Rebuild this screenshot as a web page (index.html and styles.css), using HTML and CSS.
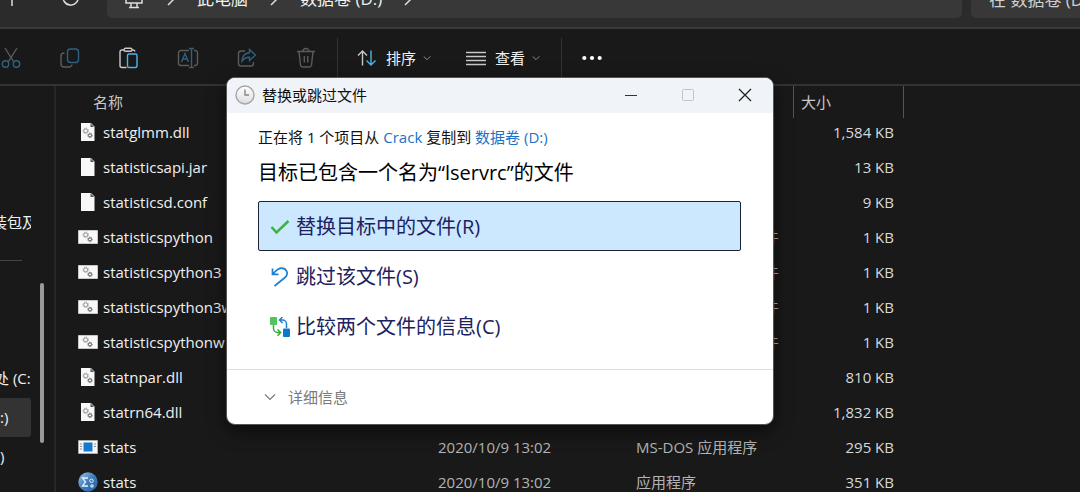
FILE: index.html
```html
<!DOCTYPE html>
<html lang="zh-CN">
<head>
<meta charset="utf-8">
<title>数据卷 (D:)</title>
<link rel="stylesheet" href="styles.css">
</head>
<body>
<svg class="defs" aria-hidden="true">
  <symbol id="gears" viewBox="0 0 12 12">
    <circle cx="3.7" cy="3.8" r="2" fill="none" stroke="#8a8a8a" stroke-width=".9"/>
    <circle cx="3.7" cy="3.8" r="2.800" fill="none" stroke="#999" stroke-width=".9" stroke-dasharray="1.1 1.1"/>
    <circle cx="8" cy="8.4" r="1.6" fill="none" stroke="#555" stroke-width="1"/>
    <circle cx="8" cy="8.4" r="2.300" fill="none" stroke="#666" stroke-width=".8" stroke-dasharray=".9 .9"/>
  </symbol>
  <symbol id="file-blank" viewBox="0 0 20 20">
    <path d="M3 1h9.500l4 4v14H3z" fill="#f8f8f8"/>
    <path d="M12.500 1v4h4z" fill="#555"/><path d="M12.500 1l4 4" stroke="#ddd" stroke-width=".8"/>
  </symbol>
  <symbol id="file-dll" viewBox="0 0 20 20">
    <use href="#file-blank"/><use href="#gears" x="4" y="5" width="12" height="12"/>
  </symbol>
  <symbol id="file-bat" viewBox="0 0 20 20">
    <path d="M.5 3.500h19v13H.5z" fill="#f8f8f8" stroke="#c8c8c8"/>
    <use href="#gears" x="4" y="4" width="12" height="12"/>
  </symbol>
  <symbol id="file-dos" viewBox="0 0 20 20">
    <path d="M.5 3.500h19v13H.5z" fill="#f8f8f8" stroke="#aaa"/>
    <path d="M5.500 5.500h9v9h-9z" fill="#1479d0"/>
    <path d="M2 7h2M2 9.500h2M2 12h2M16 7h2M16 9.500h2" stroke="#888"/>
  </symbol>
  <symbol id="file-stats" viewBox="0 0 20 20">
    <circle cx="10" cy="10" r="9.700" fill="url(#ball)"/>
    <path d="M10 6H4.500l3 4-3 4H10" fill="none" stroke="#e4f0fb" stroke-width="1.300"/>
    <circle cx="13.500" cy="8.800" r="1.700" fill="none" stroke="#e4f0fb"/>
    <circle cx="14" cy="14" r="1.800" fill="#bcd8f0"/>
  </symbol>
  <symbol id="chevron-right" viewBox="0 0 8 14"><path d="M1 1l6 6-6 6" fill="none" stroke="#ddd" stroke-width="1.500"/></symbol>
  <symbol id="chevron-down" viewBox="0 0 12 8"><path d="M1 1.500l5 5 5-5" fill="none" stroke="currentColor" stroke-width="1.200"/></symbol>
  <linearGradient id="ball" x1="0" y1="0" x2="1" y2="1"><stop offset="0" stop-color="#9cc6ea"/><stop offset=".5" stop-color="#3f7db8"/><stop offset="1" stop-color="#2a5f98"/></linearGradient>
  <linearGradient id="clock-face" x1="0" y1="0" x2="0" y2="1"><stop offset="0" stop-color="#fff"/><stop offset="1" stop-color="#ddd"/></linearGradient>
</svg>

<div class="explorer">
  <header class="addressbar">
    <button class="nav-button" aria-label="向上"><svg width="20" height="20" viewBox="0 0 20 20"><path d="M10 18V3M4 9l6-6 6 6"/></svg></button>
    <button class="nav-button" aria-label="刷新"><svg width="20" height="20" viewBox="0 0 20 20"><path d="M17 8a7.500 7.500 0 1 1-3-4.500M14 0v4h-4"/></svg></button>
    <nav class="path" aria-label="路径">
      <svg class="monitor" width="18" height="18" viewBox="0 0 18 18"><path d="M1 1h16v11H1zM6 12.500v4M12 12.500v4M4 16.500h10"/></svg>
      <svg class="crumb-arrow" width="8" height="14"><use href="#chevron-right"/></svg>
      <button class="crumb">此电脑</button>
      <svg class="crumb-arrow" width="8" height="14"><use href="#chevron-right"/></svg>
      <button class="crumb">数据卷 (D:)</button>
      <svg class="crumb-arrow" width="8" height="14"><use href="#chevron-right"/></svg>
    </nav>
    <input class="search" type="text" aria-label="搜索" placeholder="在 数据卷 (D:) 中搜索">
  </header>

  <div class="toolbar" role="toolbar">
    <button class="tool dim" aria-label="剪切"><svg width="22" height="22" viewBox="0 0 22 22"><path d="M5 1l8.500 13.500M17 1L8.500 14.500" class="g"/><circle cx="5.500" cy="17" r="3.200" class="b"/><circle cx="16.500" cy="17" r="3.200" class="b"/></svg></button>
    <button class="tool dim" aria-label="复制"><svg width="22" height="22" viewBox="0 0 22 22"><path d="M5.500 6H5a3 3 0 0 0-3 3v8a3 3 0 0 0 3 3h5a3 3 0 0 0 3-2.500" class="g"/><rect x="8.500" y="2" width="11" height="13.500" rx="3" class="b"/></svg></button>
    <button class="tool" aria-label="粘贴"><svg width="22" height="22" viewBox="0 0 22 22"><path d="M6 3H4a2 2 0 0 0-2 2v13.500a2 2 0 0 0 2 2h4.500M14 3h1a2 2 0 0 1 2 1.500" class="g"/><rect x="6" y="1.200" width="8" height="3" rx="1.500" class="g"/><rect x="9.500" y="7" width="9.500" height="13.500" rx="1.500" class="b"/></svg></button>
    <button class="tool dim" aria-label="重命名"><svg width="22" height="22" viewBox="0 0 22 22"><path d="M12 3.500H4a2.500 2.500 0 0 0-2.500 2.500v10A2.500 2.500 0 0 0 4 18.500h8M17 3.500h.5A2.500 2.500 0 0 1 20.500 6v10a2.500 2.500 0 0 1-3 2.500H17" class="g"/><path d="M4.500 15L8 6.500l3.500 8.500M5.700 12h4.600M14.500 1.500v19M12 1.500h5M12 20.500h5" class="b"/></svg></button>
    <button class="tool dim" aria-label="共享"><svg width="22" height="22" viewBox="0 0 22 22"><path d="M9 4H5a2.500 2.500 0 0 0-2.500 2.500v10A2.500 2.500 0 0 0 5 19h10a2.500 2.500 0 0 0 2.500-2.500V15" class="g"/><path d="M13.500 2.500l6 5.500-6 5.500v-3.300c-3.500-.2-5.500 1-7.500 3.800.3-5 3-8 7.500-8.300z" class="b"/></svg></button>
    <button class="tool dim" aria-label="删除"><svg width="22" height="22" viewBox="0 0 22 22"><path d="M2 4.500h18M4 4.500L5.500 18a2.300 2.300 0 0 0 2.300 2h6.400a2.300 2.300 0 0 0 2.300-2L18 4.500M8 4.500a3 3 0 0 1 6 0M9.300 9v6.500M12.700 9v6.500" class="g"/></svg></button>
    <span class="rule"></span>
    <button class="menu"><svg width="20" height="18" viewBox="0 0 20 18"><path d="M5.500 16.500V2M1 6.500L5.500 2 10 6.500" class="g"/><path d="M14 1.500V16M9.500 11.500L14 16l4.500-4.500" class="b"/></svg>排序<svg class="caret" width="8" height="6"><use href="#chevron-down"/></svg></button>
    <button class="menu"><svg width="20" height="18" viewBox="0 0 20 18"><path d="M0 3.500h20M0 7.500h20M0 11.500h20M0 15.500h20" class="g"/></svg>查看<svg class="caret" width="8" height="6"><use href="#chevron-down"/></svg></button>
    <span class="rule"></span>
    <button class="more" aria-label="更多"><svg width="20" height="6" viewBox="0 0 20 6"><g fill="#fff"><circle cx="2.300" cy="3" r="2.100"/><circle cx="10" cy="3" r="2.100"/><circle cx="17.700" cy="3" r="2.100"/></g></svg></button>
  </div>

  <main class="content">
    <aside class="sidebar">
      <nav class="tree">
        <a class="place" href="#">装包及</a>
        <hr class="tree-rule">
        <a class="place drive-c" href="#">处 (C:)</a>
        <a class="place selected" href="#">:)</a>
        <a class="place" href="#">)</a>
      </nav>
      <div class="scrollbar"></div>
    </aside>
    <table class="files">
      <colgroup><col class="c-name"><col class="c-date"><col class="c-type"><col class="c-size"><col></colgroup>
      <thead><tr><th>名称</th><th>修改日期</th><th class="split">类型</th><th class="split">大小</th><th></th></tr></thead>
      <tbody>
        <tr><td><span class="name"><svg width="20" height="20"><use href="#file-dll"/></svg>statglmm.dll</span></td><td></td><td></td><td class="size">1,584 KB</td><td></td></tr>
        <tr><td><span class="name"><svg width="20" height="20"><use href="#file-blank"/></svg>statisticsapi.jar</span></td><td></td><td></td><td class="size">13 KB</td><td></td></tr>
        <tr><td><span class="name"><svg width="20" height="20"><use href="#file-blank"/></svg>statisticsd.conf</span></td><td></td><td></td><td class="size">9 KB</td><td></td></tr>
        <tr><td><span class="name"><svg width="20" height="20"><use href="#file-bat"/></svg>statisticspython</span></td><td></td><td>Windows 批处理文件</td><td class="size">1 KB</td><td></td></tr>
        <tr><td><span class="name"><svg width="20" height="20"><use href="#file-bat"/></svg>statisticspython3</span></td><td></td><td>Windows 批处理文件</td><td class="size">1 KB</td><td></td></tr>
        <tr><td><span class="name"><svg width="20" height="20"><use href="#file-bat"/></svg>statisticspython3w</span></td><td></td><td>Windows 批处理文件</td><td class="size">1 KB</td><td></td></tr>
        <tr><td><span class="name"><svg width="20" height="20"><use href="#file-bat"/></svg>statisticspythonw</span></td><td></td><td>Windows 批处理文件</td><td class="size">1 KB</td><td></td></tr>
        <tr><td><span class="name"><svg width="20" height="20"><use href="#file-dll"/></svg>statnpar.dll</span></td><td></td><td></td><td class="size">810 KB</td><td></td></tr>
        <tr><td><span class="name"><svg width="20" height="20"><use href="#file-dll"/></svg>statrn64.dll</span></td><td></td><td></td><td class="size">1,832 KB</td><td></td></tr>
        <tr><td><span class="name"><svg width="20" height="20"><use href="#file-dos"/></svg>stats</span></td><td>2020/10/9 13:02</td><td>MS-DOS 应用程序</td><td class="size">295 KB</td><td></td></tr>
        <tr><td><span class="name"><svg width="20" height="20"><use href="#file-stats"/></svg>stats</span></td><td>2020/10/9 13:02</td><td>应用程序</td><td class="size">351 KB</td><td></td></tr>
      </tbody>
    </table>
  </main>
</div>

<section class="dialog" role="dialog" aria-labelledby="dialog-title">
  <div class="titlebar">
    <svg width="20" height="20" viewBox="0 0 20 20"><circle cx="10" cy="10" r="9" fill="url(#clock-face)" stroke="#a5a5a5" stroke-width="1.400"/><path d="M10 4.500V10h4" fill="none" stroke="#888" stroke-width="1.400"/></svg>
    <span class="title" id="dialog-title">替换或跳过文件</span>
    <button class="window-button" aria-label="最小化"><svg width="14" height="14" viewBox="0 0 14 14"><path d="M1 7.500h12" stroke="#333"/></svg></button>
    <button class="window-button" aria-label="最大化" disabled><svg width="14" height="14" viewBox="0 0 14 14"><rect x="1.500" y="1.500" width="11" height="11" rx="1" fill="none" stroke="#c2c5ca"/></svg></button>
    <button class="window-button" aria-label="关闭"><svg width="14" height="14" viewBox="0 0 14 14"><path d="M1 1l12 12M13 1L1 13" stroke="#222" stroke-width="1.300"/></svg></button>
  </div>
  <div class="dialog-body">
    <p class="summary">正在将 1 个项目从 <a href="#">Crack</a> 复制到 <a href="#">数据卷 (D:)</a></p>
    <h1 class="question">目标已包含一个名为“lservrc”的文件</h1>
    <button class="option current"><svg width="20" height="20" viewBox="0 0 20 20"><path d="M1.500 10l5 5.500L18.500 4" fill="none" stroke="#3cb43c" stroke-width="2.600"/></svg>替换目标中的文件(R)</button>
    <button class="option"><svg width="20" height="20" viewBox="0 0 20 20"><path d="M4.500 19L15 10.500C19.500 6.500 16 .8 11 1.200 7.500 1.500 5.500 4 3 7M2.500 1.500V7.300h6" fill="none" stroke="#1a80d2" stroke-width="1.700"/></svg>跳过该文件(S)</button>
    <button class="option"><svg width="20" height="20" viewBox="0 0 20 20"><rect x="0" y="0" width="7" height="8" rx="1" fill="#50c35a"/><path d="M3.500 8v3.500a4 4 0 0 0 4 4H10M7.500 12.500l3.200 3-3.200 3.200" fill="none" stroke="#3aa83a" stroke-width="1.500"/><rect x="13" y="11.500" width="7" height="8.500" rx="1" fill="#0b78d0"/><path d="M16.500 11V7a4 4 0 0 0-4-4h-2.500M12.500 0L9.500 3l3 3" fill="none" stroke="#1a80d2" stroke-width="1.500"/></svg>比较两个文件的信息(C)</button>
  </div>
  <div class="dialog-footer">
    <button class="details"><svg width="12" height="8"><use href="#chevron-down"/></svg>详细信息</button>
  </div>
</section>
</body>
</html>
```
FILE: styles.css
```css
* { box-sizing: border-box; }
body {
  margin: 0;
  background: #191919;
  color: #f0f0f0;
  font: 15px/20px "Open Sans", "Noto Sans CJK SC", sans-serif;
}
button, input { font: inherit; color: inherit; background: none; border: 0; padding: 0; }
button { display: flex; align-items: center; }
a { color: inherit; text-decoration: none; }
svg { flex: none; }
.defs { position: absolute; width: 0; height: 0; }

.explorer { display: flex; flex-direction: column; height: 100vh; overflow: hidden; }

.addressbar {
  display: flex;
  align-items: flex-end;
  flex: none;
  height: 29px;
  padding-bottom: 9px;
  background: #2b2b2b;
  border-bottom: 2px solid #393939;
  font-size: 17px;
  overflow: hidden;
}
.nav-button { width: 59px; height: 40px; justify-content: center; }
.nav-button:first-child { margin-left: -18px; }
.nav-button svg, .monitor { fill: none; stroke: #ddd; stroke-width: 1.5; }
.path {
  display: flex;
  align-items: center;
  flex: 1;
  height: 38px;
  margin: 0 9px 0 7px;
  padding-left: 18px;
  background: #383838;
  border-radius: 5px;
}
.monitor { margin-top: 2px; }
.crumb-arrow { margin: 0 22px 0 24px; }
.crumb + .crumb-arrow { margin-left: 22px; }
.search { width: 109px; height: 38px; padding-left: 18px; background: #383838; border-radius: 5px 0 0 5px; }
.search::placeholder { color: #d0d0d0; opacity: 1; }

.toolbar {
  display: flex;
  align-items: center;
  flex: none;
  height: 57px;
  padding-top: 2px;
  border-bottom: 2px solid #333;
}
.tool { width: 59px; height: 40px; justify-content: center; }
.tool:first-child { margin-left: -19px; }
.toolbar svg { fill: none; stroke-width: 1.4; }
.toolbar .g { stroke: #c8c8c8; }
.toolbar .b { stroke: #4cb4ea; }
.dim .g { stroke: #5c5c5c; }
.dim .b { stroke: #2c6280; }
.rule { width: 1px; align-self: stretch; margin: 7px 0 0 2px; background: #333; }
.menu { gap: 9px; padding: 0 16px 0 19px; height: 40px; }
.menu + .menu { padding-right: 19px; }
.caret { margin-left: -2px; color: #aaa; }
.more { height: 40px; padding-left: 20px; }

.content { display: flex; flex: 1; min-height: 0; }
.sidebar { display: flex; flex: none; width: 56px; border-right: 2px solid #272727; }
.tree { width: 31px; padding-top: 117px; overflow: hidden; }
.place { display: block; height: 39px; line-height: 38px; white-space: nowrap; }
.place:first-child { text-indent: -8px; }
.drive-c { text-indent: -6px; }
.selected { background: #333; border-radius: 0 3px 3px 0; }
.tree-rule { width: 22px; height: 1px; margin: 18px 0 98px; border: 0; background: #444; }
.scrollbar { width: 4px; height: 160px; margin: 197px 0 0 9px; border-radius: 2px; background: #9a9a9a; }

.files { flex: 1; width: 0; table-layout: fixed; border-collapse: collapse; align-self: flex-start; }
.c-name { width: 382px; }
.c-date { width: 198px; }
.c-type { width: 158px; }
.c-size { width: 110px; }
.files th { position: relative; height: 28px; padding: 3px 0 0; text-align: left; font-weight: 400; color: #c8c8c8; }
.files th:first-child { padding-left: 37px; }
.files th:nth-child(4) { padding-left: 7px; }
.split::after { content: ""; position: absolute; top: 0; right: 0; width: 1px; height: 32px; background: #555; }
.files td { height: 35px; padding: 0; white-space: nowrap; color: #b4b4b4; }
.files .size { padding-right: 10px; text-align: right; color: #d8d8d8; }
.name { display: flex; align-items: center; gap: 5px; padding-left: 22px; color: #f0f0f0; }

.dialog {
  position: absolute;
  left: 226px;
  top: 77px;
  width: 548px;
  border: 1px solid #555;
  border-radius: 9px;
  background: #fff;
  color: #111;
  overflow: hidden;
  box-shadow: 0 6px 18px rgba(0, 0, 0, .55);
}
.titlebar { display: flex; align-items: center; height: 35px; padding: 0 0 2px 8px; background: #f0f3f8; }
.title { flex: 1; margin-left: 7px; }
.window-button { width: 57px; height: 33px; justify-content: center; }
.dialog-body { padding: 11px 32px 18px 31px; }
.summary { margin: 0; line-height: 26px; }
.summary a { color: #1a73c8; }
.question { margin: 7px 0 12px; font-size: 20px; line-height: 32px; font-weight: 400; color: #000; }
.option {
  width: 100%;
  height: 50px;
  gap: 6px;
  padding: 2px 0 0 11px;
  border: 1px solid transparent;
  border-radius: 2px;
  font-size: 20px;
  color: #1c2260;
}
.current { background: #cce8ff; border-color: #1c2433; }
.dialog-footer { padding: 17px 37px; border-top: 1px solid #dfdfdf; }
.details { gap: 12px; color: #7a7a7a; }
```
